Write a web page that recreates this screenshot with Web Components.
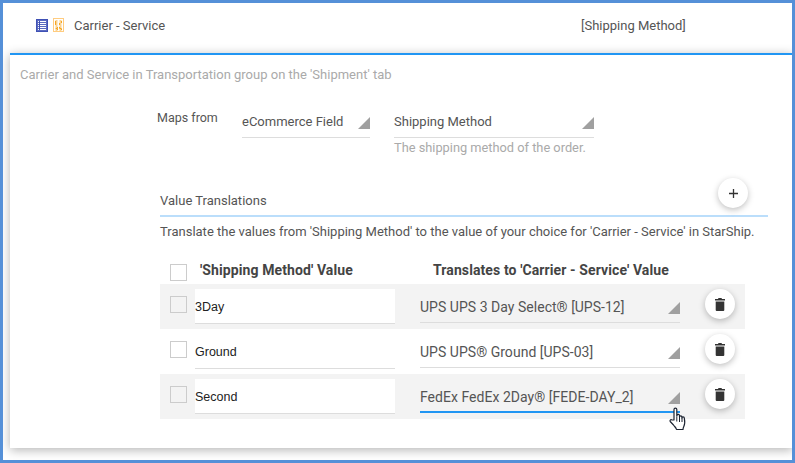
<!DOCTYPE html>
<html>
<head>
<meta charset="utf-8">
<title>Carrier - Service</title>
<style>
    html, body { margin: 0; height: 100%; background: #fff; }
    body { font-family: Roboto, "Liberation Sans", sans-serif; }
</style>
</head>
<body>
<mapping-window>
    <mapping-header slot="header" title-text="Carrier - Service" value-text="[Shipping Method]"></mapping-header>
    <maps-from></maps-from>
    <value-translations>
        <translation-row source="3Day" target="UPS UPS 3 Day Select® [UPS-12]" shaded></translation-row>
        <translation-row source="Ground" target="UPS UPS® Ground [UPS-03]"></translation-row>
        <translation-row source="Second" target="FedEx FedEx 2Day® [FEDE-DAY_2]" shaded active></translation-row>
    </value-translations>
</mapping-window>

<script>
// outer window : blue frame + card with the blue top line
class MappingWindow extends HTMLElement {
    constructor() {
        super();
        this._root = this.attachShadow({ mode: "open" });
        this._root.innerHTML = `
            <style>
                :host { display: flex; flex-direction: column; box-sizing: border-box; width: 795px; height: 463px; border: 3px solid #5590d8; background: #fff; overflow: hidden; }
                .card { flex: 1; margin: 0 -1px 12px 7px; border-top: 2px solid #2196f3; box-shadow: 0 2px 10px rgba(0, 0, 0, 0.3); background: #fff; padding: 12px 10px 0; }
                .intro { font-size: 13px; line-height: 16px; color: #aaa; }
            </style>
            <slot name="header"></slot>
            <div class="card">
                <div class="intro">Carrier and Service in Transportation group on the 'Shipment' tab</div>
                <slot></slot>
            </div>
        `;
    }
}

class MappingHeader extends HTMLElement {
    constructor() {
        super();
        this._root = this.attachShadow({ mode: "open" });
    }
    connectedCallback() {
        this._root.innerHTML = `
            <style>
                :host { display: flex; align-items: center; box-sizing: border-box; height: 50px; padding: 0 0 6px 33px; font-size: 13px; color: #555; }
                svg { display: block; margin-right: 5px; }
                .title { margin-left: 5px; width: 507px; }
            </style>
            <svg width="12" height="13" viewBox="0 0 12 13">
                <rect width="12" height="13" fill="#3f51b5"/>
                <rect x="1" y="1" width="10" height="11" fill="#5c6bc0"/>
                <path d="M2 2.500h8M2 4.500h8M2 6.500h8M2 8.500h8M2 10.500h8" stroke="#fff" stroke-width="1"/>
                <path d="M3.500 2v9" stroke="#3f51b5" stroke-width="1"/>
            </svg>
            <svg width="11" height="14" viewBox="0 0 11 14" style="margin-top:-1px">
                <rect x=".5" y=".5" width="10" height="13" fill="#fff" stroke="#ffcc80"/>
                <path d="M2.500 3h2M2.500 5h2M2.500 3v4h2M6.500 3h2v2h-2v2h2M2.500 9h2v1.500h-2M4.500 10.500V12h-2M6.500 9h2M6.500 9v1.500h2V12h-2" fill="none" stroke="#f5a623"/>
            </svg>
            <span class="title">${this.getAttribute("title-text")}</span>
            <span>${this.getAttribute("value-text")}</span>
        `;
    }
}

// select-like field : text, underline and grey corner triangle
class FieldSelect extends HTMLElement {
    constructor() {
        super();
        this._root = this.attachShadow({ mode: "open" });
        this._root.innerHTML = `
            <style>
                :host { display: block; box-sizing: border-box; position: relative; height: 100%; border-bottom: 1px solid #ddd; color: #555; white-space: nowrap; }
                :host([active]) { border-bottom: 2px solid #2196f3; }
                .arrow { position: absolute; right: 0; bottom: 8px; width: 0; height: 0; border-style: solid; border-width: 0 0 12px 12px; border-color: transparent transparent #a0a0a0 transparent; }
                :host([active]) .arrow { bottom: 7px; }
            </style>
            <slot></slot>
            <span class="arrow"></span>
        `;
    }
}

class MapsFrom extends HTMLElement {
    constructor() {
        super();
        this._root = this.attachShadow({ mode: "open" });
        this._root.innerHTML = `
            <style>
                :host { display: grid; grid-template-columns: 61px 128px 200px; column-gap: 24px; margin: 27px 0 0 137px; font-size: 12.5px; color: #555; }
                .lbl { line-height: 16px; }
                .sel { height: 28px; line-height: 24px; font-size: 13px; }
                .hint { grid-column: 3; margin-top: 2px; line-height: 16px; font-size: 12.8px; color: #aaa; }
            </style>
            <div class="lbl">Maps from</div>
            <div class="sel"><field-select>eCommerce Field</field-select></div>
            <div class="sel"><field-select>Shipping Method</field-select></div>
            <div class="hint">The shipping method of the order.</div>
        `;
    }
}

class RoundButton extends HTMLElement {
    constructor() {
        super();
        this._root = this.attachShadow({ mode: "open" });
        this._root.innerHTML = `
            <style>
                :host { display: flex; align-items: center; justify-content: center; width: 30px; height: 30px; border-radius: 50%; background: #fff; box-shadow: 0 2px 6px rgba(0, 0, 0, 0.25); }
            </style>
            <slot></slot>
        `;
    }
}

class ValueTranslations extends HTMLElement {
    constructor() {
        super();
        this._root = this.attachShadow({ mode: "open" });
        this._root.innerHTML = `
            <style>
                :host { display: block; margin: 17px 0 0 140px; width: 608px; }
                .head { display: flex; align-items: flex-end; justify-content: space-between; height: 37px; padding-bottom: 5px; border-bottom: 2px solid #bbdefb; font-size: 13px; color: #555; line-height: 18px; }
                round-button { margin: 0 20px 2px 0; }
                .desc { margin-top: 7px; font-size: 13px; line-height: 16px; color: #555; }
                .cols { display: grid; grid-template-columns: 10px 17px 246px 1fr; align-items: center; height: 22px; margin-top: 19px; font-size: 14px; font-weight: 700; letter-spacing: 0.1px; color: #444; white-space: nowrap; }
                .cb { grid-column: 2; box-sizing: border-box; width: 17px; height: 17px; margin-top: 4px; border: 1px solid #ccc; background: #fff; }
                .c1 { padding-left: 13px; }
                .rows { width: 585px; margin-top: 3px; }
            </style>
            <div class="head">
                <span>Value Translations</span>
                <round-button>
                    <svg width="11" height="11" viewBox="0 0 11 11"><path d="M5.500 1v9M1 5.500h9" stroke="#333" stroke-width="1.300"/></svg>
                </round-button>
            </div>
            <div class="desc">Translate the values from 'Shipping Method' to the value of your choice for 'Carrier - Service' in StarShip.</div>
            <div class="cols">
                <span class="cb"></span>
                <span class="c1">'Shipping Method' Value</span>
                <span>Translates to 'Carrier - Service' Value</span>
            </div>
            <div class="rows"><slot></slot></div>
        `;
    }
}

class TranslationRow extends HTMLElement {
    constructor() {
        super();
        this._root = this.attachShadow({ mode: "open" });
    }
    connectedCallback() {
        const active = this.hasAttribute("active");
        this._root.innerHTML = `
            <style>
                :host { display: flex; align-items: flex-start; position: relative; height: 45px; padding-left: 10px; font-size: 12.5px; }
                :host([shaded]) { background: #f3f3f3; }
                .cb { box-sizing: border-box; width: 17px; height: 17px; margin-top: 12px; border: 1px solid #ccc; background: #fff; }
                :host([shaded]) .cb { background: #f3f3f3; }
                .src { box-sizing: border-box; width: 200px; height: 35px; margin: 5px 0 0 8px; line-height: 36px; background: #fff; border-bottom: 1px solid #ddd; font-family: "Liberation Sans", sans-serif; color: #222; }
                .tgt { width: 260px; height: 34px; margin: 5px 0 0 25px; line-height: 37px; font-size: 14px; letter-spacing: 0.03px; }
                round-button { margin: 5px 0 0 25px; }
            </style>
            <span class="cb"></span>
            <div class="src">${this.getAttribute("source")}</div>
            <div class="tgt"><field-select ${active ? "active" : ""}>${this.getAttribute("target")}</field-select></div>
            <round-button>
                <svg width="10" height="13" viewBox="0 0 10 13"><path d="M3.500 0h3l.5 1h3v1.500H0V1h3zM.7 3.500h8.600V12a1 1 0 0 1-1 1H1.700a1 1 0 0 1-1-1z" fill="#333"/></svg>
            </round-button>
            ${active ? `<hand-cursor></hand-cursor>` : ""}
        `;
    }
}

// pointer on top of the last row
class HandCursor extends HTMLElement {
    constructor() {
        super();
        this._root = this.attachShadow({ mode: "open" });
        this._root.innerHTML = `
            <style>
                :host { display: block; position: absolute; left: 509px; top: 33px; width: 18px; height: 24px; }
                svg { display: block; }
            </style>
            <svg width="18" height="24" viewBox="0 0 18 24">
                <path d="M5 13V2.500a1.400 1.400 0 0 1 2.800 0V9l.2-.8a1.300 1.300 0 0 1 2.500.3V10a1.200 1.200 0 0 1 2.400 0v1a1.200 1.200 0 0 1 2.400 0c.6 3 .7 6-.5 8.500-.5 1-.8 2-.8 3H7.500c-.3-1.500-1.500-2.500-3-4.500L1.200 14.500c-.6-1 .3-2.200 1.500-1.700z" fill="#fff" stroke="#1c2331" stroke-width="1.200" stroke-linejoin="round"/>
                <path d="M7.800 9.500v5M10.500 10v5M13 11v4" stroke="#1c2331" stroke-width="1"/>
            </svg>
        `;
    }
}

customElements.define("mapping-window", MappingWindow);
customElements.define("mapping-header", MappingHeader);
customElements.define("field-select", FieldSelect);
customElements.define("maps-from", MapsFrom);
customElements.define("round-button", RoundButton);
customElements.define("value-translations", ValueTranslations);
customElements.define("translation-row", TranslationRow);
customElements.define("hand-cursor", HandCursor);
</script>
</body>
</html>
